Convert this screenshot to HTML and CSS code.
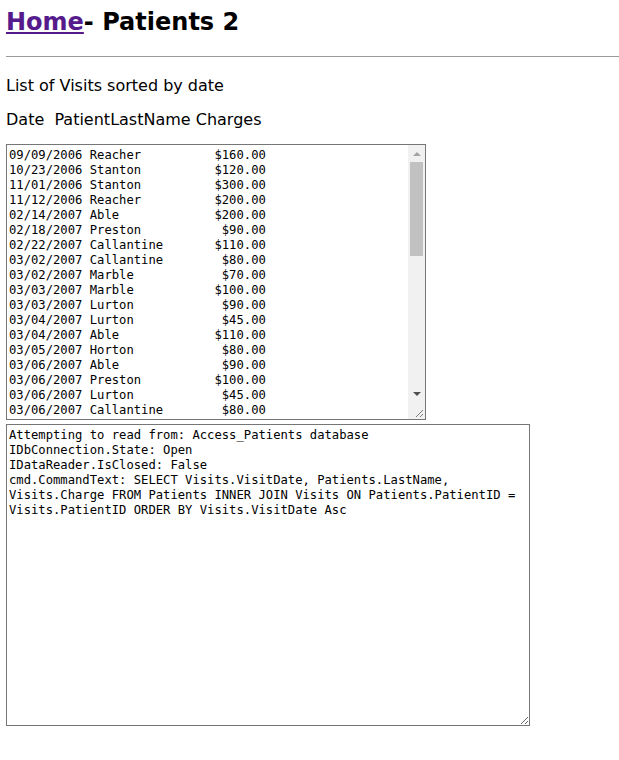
FILE: index.html
```html
<!DOCTYPE html>
<html lang="en">
<head>
<meta charset="utf-8">
<title>Patients 2</title>
<link rel="stylesheet" href="styles.css">
</head>
<body>
<h1 class="title"><a class="home" href="#">Home</a>- Patients 2</h1>
<hr class="rule">
<p class="caption">List of Visits sorted by date</p>
<p class="caption">Date&nbsp; PatientLastName Charges</p>
<div class="listbox">
<div class="list-lines">09/09/2006 Reacher          $160.00
10/23/2006 Stanton          $120.00
11/01/2006 Stanton          $300.00
11/12/2006 Reacher          $200.00
02/14/2007 Able             $200.00
02/18/2007 Preston           $90.00
02/22/2007 Callantine       $110.00
03/02/2007 Callantine        $80.00
03/02/2007 Marble            $70.00
03/03/2007 Marble           $100.00
03/03/2007 Lurton            $90.00
03/04/2007 Lurton            $45.00
03/04/2007 Able             $110.00
03/05/2007 Horton            $80.00
03/06/2007 Able              $90.00
03/06/2007 Preston          $100.00
03/06/2007 Lurton            $45.00
03/06/2007 Callantine        $80.00</div>
<div class="scrollbar">
<div class="sb-btn sb-up"></div>
<div class="sb-track"><div class="sb-thumb"></div></div>
<div class="sb-btn sb-down"></div>
<div class="sb-corner"><svg class="grip" width="17" height="17" viewBox="0 0 17 17"><line x1="15" y1="8" x2="8" y2="15"/><line x1="15" y1="12" x2="12" y2="15"/></svg></div>
</div>
</div>
<textarea class="log" readonly>Attempting to read from: Access_Patients database
IDbConnection.State: Open
IDataReader.IsClosed: False
cmd.CommandText: SELECT Visits.VisitDate, Patients.LastName,
Visits.Charge FROM Patients INNER JOIN Visits ON Patients.PatientID =
Visits.PatientID ORDER BY Visits.VisitDate Asc</textarea>
</body>
</html>
```
FILE: styles.css
```css
html, body {
  background: #fff;
}
body {
  margin: 0;
  padding: 0 6px;
  font-family: "DejaVu Sans", Verdana, sans-serif;
  color: #000;
}
.title {
  margin: 0;
  padding-top: 8px;
  font-size: 24px;
  line-height: 29px;
  font-weight: bold;
}
.home {
  color: #551a8b;
  text-decoration: underline;
}
.rule {
  margin: 19px -6px 19px 0;
  border: 0;
  border-top: 1px solid #9a9a9a;
  height: 0;
}
.caption {
  margin: 0 0 15px;
  font-size: 16px;
  line-height: 19px;
}
.listbox {
  display: flex;
  width: 420px;
  height: 276px;
  box-sizing: border-box;
  border: 1px solid #767676;
  background: #fff;
}
.list-lines {
  flex: 1;
  padding: 3px 2px 2px;
  overflow: hidden;
  font-family: "DejaVu Sans Mono", monospace;
  font-size: 12.2px;
  line-height: 15px;
  white-space: pre;
}
.scrollbar {
  width: 17px;
  display: flex;
  flex-direction: column;
  background: #f1f1f1;
}
.sb-btn {
  height: 17px;
  display: flex;
  align-items: center;
  justify-content: center;
}
.sb-up::before {
  content: "";
  width: 0;
  height: 0;
  border-left: 4px solid transparent;
  border-right: 4px solid transparent;
  border-bottom: 4px solid #a3a3a3;
}
.sb-down::before {
  content: "";
  width: 0;
  height: 0;
  border-left: 4px solid transparent;
  border-right: 4px solid transparent;
  border-top: 4px solid #505050;
}
.sb-track {
  flex: 1;
  padding: 0 2px;
}
.sb-thumb {
  height: 94px;
  background: #c1c1c1;
}
.sb-corner {
  height: 17px;
  background: #f1f1f1;
}
.grip {
  display: block;
  stroke: #7a7a7a;
  stroke-width: 1;
}
.log {
  display: block;
  margin: 4px 0 0;
  width: 524px;
  height: 302px;
  box-sizing: border-box;
  border: 1px solid #767676;
  border-radius: 0;
  padding: 3px 2px 2px;
  font-family: "DejaVu Sans Mono", monospace;
  font-size: 12.2px;
  line-height: 15px;
  color: #000;
  background: #fff;
  resize: both;
  outline: none;
  overflow: hidden;
}
```
